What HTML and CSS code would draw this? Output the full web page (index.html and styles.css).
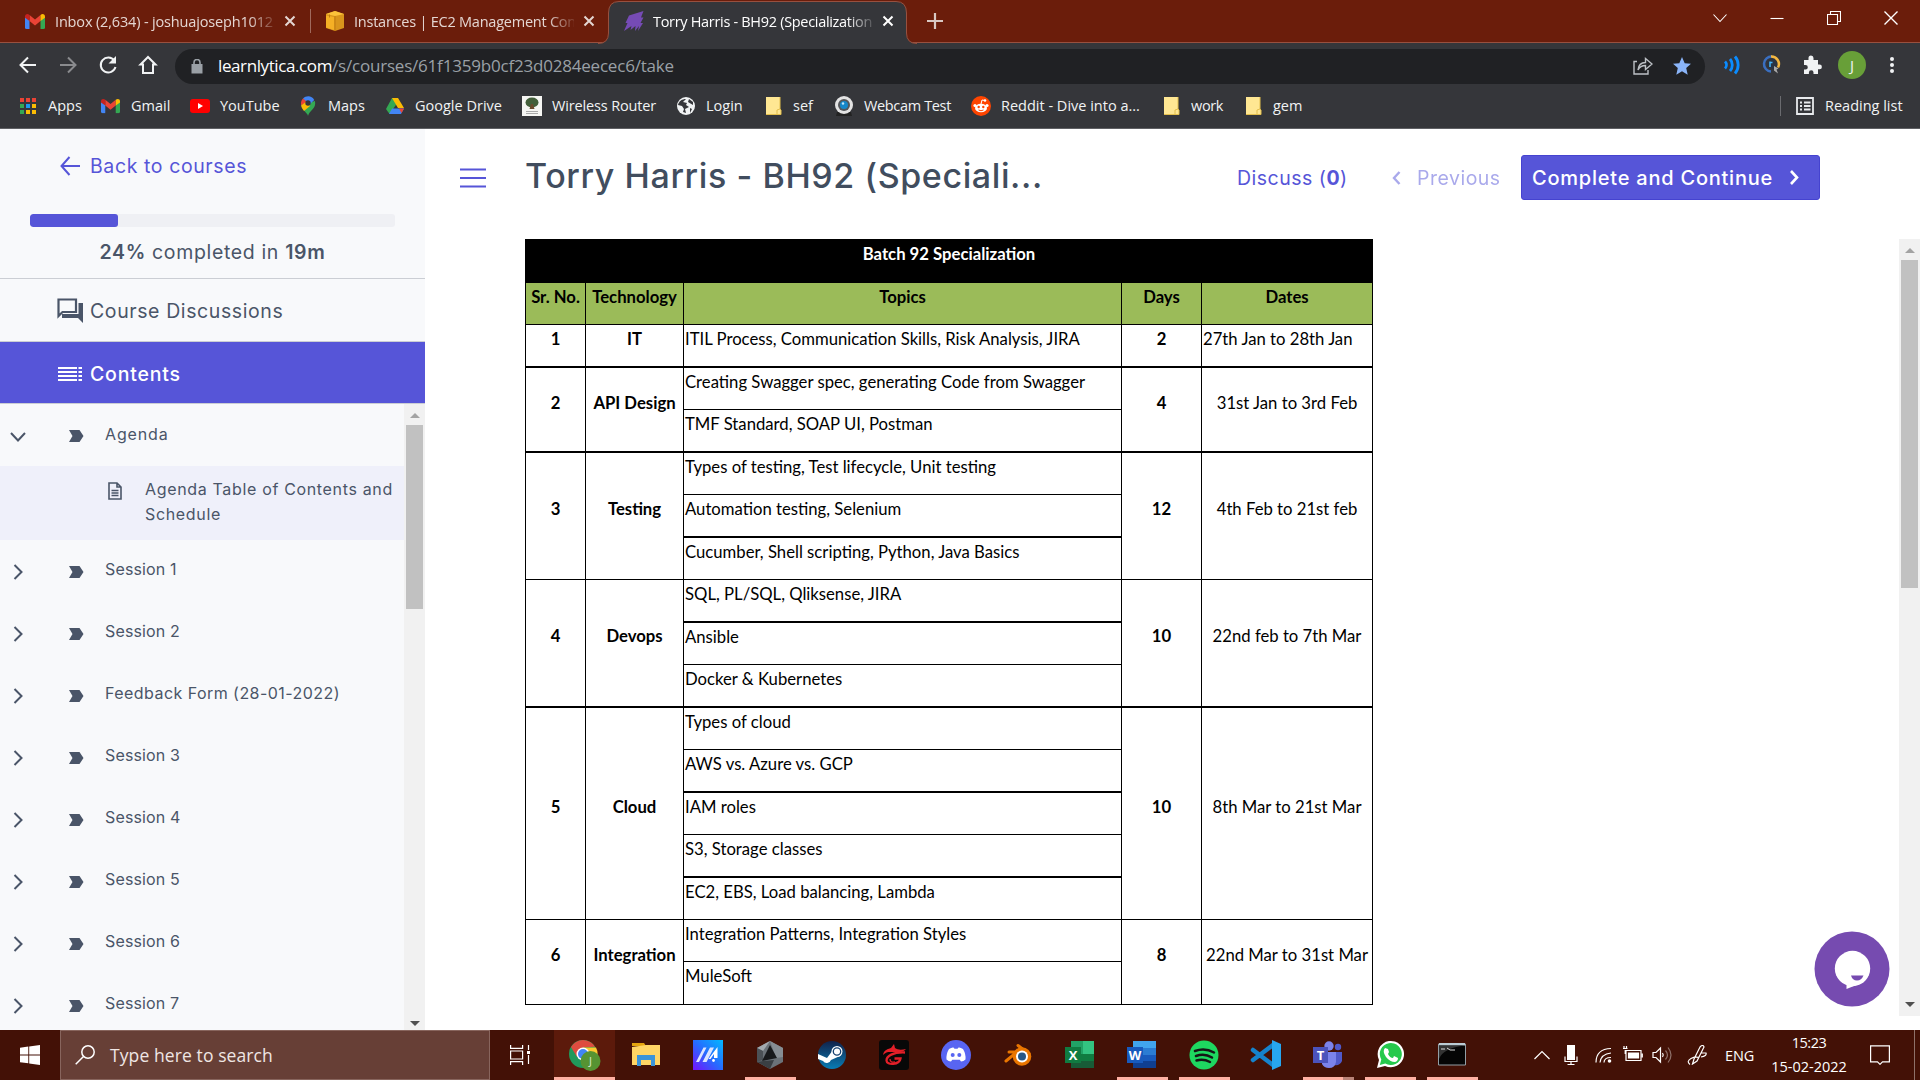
FILE: index.html
```html
<!DOCTYPE html>
<html lang="en">
<head>
<meta charset="utf-8">
<title>Torry Harris - BH92 (Specialization)</title>
<link rel="stylesheet" href="styles.css">
</head>
<body>
<svg class="defs" aria-hidden="true">
  <symbol id="gmail" viewBox="0 0 20 15"><path fill="#4285f4" d="M0 2v11.500q0 1.500 1.500 1.500H4.500V6z"/><path fill="#34a853" d="M20 2v11.500q0 1.500-1.500 1.500H15.500V6z"/><path fill="#ea4335" d="M4.500 1 10 5.500 15.500 1V7L10 11.500 4.500 7z"/><path fill="#c5221f" d="M0 2.500C0 .2 2.500-.7 4.500 1V7L0 3.800z"/><path fill="#fbbc04" d="M20 2.500C20 .2 17.500-.7 15.500 1V7L20 3.800z"/></symbol>
  <symbol id="x" viewBox="0 0 12 12"><path d="M1.500 1.500l9 9M10.500 1.500l-9 9" stroke="currentColor" stroke-width="2" fill="none"/></symbol>
  <symbol id="folder" viewBox="0 0 17 20"><path fill="#ffe793" d="M1 1h14v12l1 1v5H1z"/><path fill="none" stroke="#e3bf4d" d="M15 1v12l1 1v4.500h-4V14l3-1M1 18.500h11"/></symbol>
  <symbol id="right" viewBox="0 0 10 16"><path d="M1.500 1l7 7-7 7" fill="none" stroke="currentColor" stroke-width="2"/></symbol>
  <symbol id="tag" viewBox="0 0 15 12"><path fill="#4a5568" d="M0 0h10.500L14.500 6l-4 6H0l3.500-6z"/></symbol>
</svg>

<header class="browser">
  <div class="tabs">
    <div class="tab tab-mail"><svg class="fav" width="20" height="15"><use href="#gmail"/></svg><span class="tab-title t1">Inbox (2,634) - joshuajoseph1012</span><svg class="close" width="12" height="12"><use href="#x"/></svg></div>
    <div class="tab tab-aws"><svg class="fav" width="20" height="20" viewBox="0 0 20 20"><path fill="#d9951c" d="M1 3l9-3 9 3v14l-9 3-9-3z"/><path fill="#fcc33a" d="M1 3l9-3 9 3-9 2z"/><path fill="#f5b025" d="M1 4.500l8 1.500v13L1 16.500z"/><path stroke="#c17d10" d="M4.500 3.500v3M10 5v15" fill="none"/></svg><span class="tab-title t2">Instances | EC2 Management Con</span><svg class="close" width="12" height="12"><use href="#x"/></svg></div>
    <div class="tab tab-active">
      <svg class="tab-shape" width="319" height="43" viewBox="0 0 319 43"><path d="M0 42.500Q10.500 42.500 10.500 32V12Q10.500 .5 21 .5H298Q308.500 .5 308.500 12V32Q308.500 42.500 319 42.500V44H0z"/></svg>
      <svg class="fav" width="20" height="20" viewBox="0 0 20 20"><path fill="#764bb5" d="M5 4.500 19.500 0 17 6.500h2.500L16.500 12H19l-5 8 1-5-4 5 .5-5-5 4 1-4L0 20 3.500 12H1.500z"/></svg><span class="tab-title t3">Torry Harris - BH92 (Specialization</span><svg class="close" width="12" height="12"><use href="#x"/></svg>
    </div>
    <svg class="plus" width="16" height="16" viewBox="0 0 16 16"><path d="M8 0v16M0 8h16" stroke="#d9c8c3" stroke-width="2.200"/></svg>
    <div class="window-controls">
      <svg viewBox="0 0 14 14"><path d="M.5 3.500 7 10.500l6.500-7"/></svg>
      <svg viewBox="0 0 14 14"><path d="M.5 7.500h13"/></svg>
      <svg viewBox="0 0 14 14"><path d="M.5 3.500h10v10h-10zM3.500 3V.5h10v10H11"/></svg>
      <svg viewBox="0 0 14 14"><path d="M.5.5l13 13M13.500.5l-13 13" stroke-width="1.400"/></svg>
    </div>
  </div>

  <div class="toolbar">
    <svg class="nav" viewBox="0 0 20 20"><path d="M18 10H3M10 2.500 2.500 10l7.500 7.500"/></svg>
    <svg class="nav dim" viewBox="0 0 20 20"><path d="M2 10h15M10 2.500 17.500 10 10 17.500"/></svg>
    <svg class="nav" viewBox="0 0 20 20"><path d="M16.300 5.500A7.500 7.500 0 1 0 17.500 12"/><path d="M18 1v7.500h-7.500z" fill="#f1f3f4" stroke="none"/></svg>
    <svg class="nav" viewBox="0 0 20 20"><path d="M10 2 2.500 9.500H5V18h10V9.500h2.500z"/></svg>
    <div class="omnibox">
      <svg width="12" height="15" viewBox="0 0 12 15"><path fill="#9aa0a6" d="M.5 5h11v9.500H.5z"/><path d="M3 6V3.500a3 3 0 0 1 6 0V6" stroke="#9aa0a6" stroke-width="1.600" fill="none"/></svg>
      <span class="url"><b class="domain">learnlytica.com</b><span class="path">/s/courses/61f1359b0cf23d0284eecec6/take</span></span>
      <svg class="share" width="20" height="18" viewBox="0 0 20 18"><path d="M4 4.500H1V17h14v-4M5 13c.5-5 3-7.500 7.500-7.500V1.500L19 7l-6.500 5.500v-4C9 8.500 6.500 10 5 13z" fill="none" stroke="#bdc1c6" stroke-width="1.400"/></svg>
      <svg width="18" height="18" viewBox="0 0 18 18"><path fill="#8ab4f8" d="M9 0l2.700 6.200 6.300.6-4.800 4.300 1.500 6.700L9 14.300l-5.700 3.500 1.500-6.700L0 6.800l6.300-.6z"/></svg>
    </div>
    <div class="extensions">
      <svg viewBox="0 0 20 20"><path d="M3 6.500a5 5 0 0 1 0 7M8 4a9 9 0 0 1 0 12M13 1.500a13 13 0 0 1 0 17" fill="none" stroke="#0a8cff" stroke-width="2.800"/></svg>
      <svg viewBox="0 0 20 20"><path d="M10 1.500A7.500 7.500 0 0 0 9 16.500" fill="none" stroke="#3a6fc0" stroke-width="2.500"/><path d="M9 1.500a7.500 7.500 0 0 1 7 11" fill="none" stroke="#f4b740" stroke-width="2.500"/><circle cx="10" cy="9" r="5" fill="#2b3442"/><path d="M8 6.500v5.500M8 7.500h2.500" stroke="#45b6ff" stroke-width="1.500"/><path d="M12 11l4.500 2.500-2 1 1.500 4-4-3z" fill="#aaa"/></svg>
      <svg viewBox="0 0 20 20"><path fill="#f1f3f4" d="M2 5h4.500V3a2.500 2.500 0 0 1 5 0v2H16v4.500h1.500a2.300 2.300 0 0 1 0 4.800H16V19h-4.500v-1.500a2.300 2.300 0 0 0-4.600 0V19H2v-4.500h1.500a2.300 2.300 0 0 0 0-4.600H2z"/></svg>
      <span class="avatar">J</span>
      <svg viewBox="0 0 20 20" fill="#f1f3f4"><circle cx="10" cy="4" r="2"/><circle cx="10" cy="10" r="2"/><circle cx="10" cy="16" r="2"/></svg>
    </div>
  </div>

  <div class="bookmarks">
    <a><svg viewBox="0 0 20 20"><path fill="#ea4335" d="M2 2h4v4H2zM8 2h4v4H8zM14 2h4v4h-4z"/><path fill="#34a853" d="M2 8h4v4H2zM2 14h4v4H2z"/><path fill="#1a9af0" d="M8 8h4v4H8z"/><path fill="#fbbc04" d="M14 8h4v4h-4zM8 14h4v4H8zM14 14h4v4h-4z"/></svg><span>Apps</span></a>
    <a><svg><use href="#gmail" y="2.500" width="19" height="15"/></svg><span>Gmail</span></a>
    <a><svg viewBox="0 0 20 20"><rect y="3" width="20" height="14" rx="3" fill="#f00"/><path fill="#fff" d="M8 7l5 3-5 3z"/></svg><span>YouTube</span></a>
    <a><svg viewBox="0 0 20 20"><path fill="#34a853" d="M10 20c0-3-7-6-7-12.500L10 7l7-2c1.500 8-5.500 9-7 15z"/><path fill="#4285f4" d="M5 2.500C8-.8 14-.8 16.200 4L11 9z"/><path fill="#ea4335" d="M5 2.500 9 6 3.200 9.500C2.700 6.500 3 4.500 5 2.500z"/><path fill="#fbbc04" d="M9 5l3 5-6 5C4 12.500 3.500 11 3.200 9.500z"/><circle cx="10" cy="7" r="2.700" fill="#35363a"/></svg><span>Maps</span></a>
    <a><svg viewBox="0 0 20 20"><path fill="#34a853" d="M7 2h3L13 6 4.500 18 1 13z"/><path fill="#fbbc04" d="M7 2h6l6 10h-6z"/><path fill="#4285f4" d="M7 12.500h12L16 18H4z"/><path fill="#ea4335" d="M14 12.500h5L16.500 17z"/></svg><span>Google Drive</span></a>
    <a><svg viewBox="0 0 20 20"><path fill="#f6f6f3" d="M0 0h20v20H0z"/><ellipse cx="10" cy="6.500" rx="6.500" ry="5" fill="#435f3a"/><path fill="#6b4a2c" d="M9 8h2l1.500 5h-5z"/><path stroke="#aaa" d="M4 15.500h12M4 17.500h12"/></svg><span class="tight">Wireless Router</span></a>
    <a><svg viewBox="0 0 20 20"><circle cx="10" cy="10" r="9" fill="#f1f3f4"/><path fill="#35363a" d="M2 9l4 1 2 3-1 3 3 1-1-4 4-2-3-2 1-2-4-1 3-3C6 3 3 5 2 9zm11-6-1 3 5 3V6zM14 12l2 1-2 4z"/></svg><span>Login</span></a>
    <a><svg><use href="#folder" x="2" width="17" height="20"/></svg><span>sef</span></a>
    <a><svg viewBox="0 0 20 20"><path fill="#222" d="M3 16h14l1 4H2z"/><circle cx="10" cy="9" r="9" fill="#e3e3e3"/><circle cx="10" cy="9" r="6" fill="#54575b"/><circle cx="10" cy="9" r="4" fill="#1587c9"/><circle cx="9" cy="7.500" r="1.200" fill="#bde6fa"/></svg><span class="tighter">Webcam Test</span></a>
    <a><svg viewBox="0 0 20 20"><circle cx="10" cy="10" r="10" fill="#ff4500"/><ellipse cx="10" cy="12" rx="6" ry="4.300" fill="#fff"/><circle cx="4" cy="9.500" r="1.600" fill="#fff"/><circle cx="16" cy="9.500" r="1.600" fill="#fff"/><circle cx="14" cy="4.500" r="1.300" fill="#fff"/><path d="M10 8l1-4 3 .5" fill="none" stroke="#fff"/><circle cx="7.700" cy="11" r="1.200" fill="#ff4500"/><circle cx="12.300" cy="11" r="1.200" fill="#ff4500"/><path d="M7.500 14q2.500 1.500 5 0" fill="none" stroke="#ff4500"/></svg><span>Reddit - Dive into a...</span></a>
    <a><svg><use href="#folder" x="2" width="17" height="20"/></svg><span class="tighter">work</span></a>
    <a><svg><use href="#folder" x="2" width="17" height="20"/></svg><span>gem</span></a>
    <a class="reading"><svg viewBox="0 0 20 20"><path d="M2 2h16v16H2zM5 6.500h2M5 10h2M5 13.500h2M9 6.500h6.500M9 10h6.500M9 13.500h6.500" fill="none" stroke="#e8eaed" stroke-width="1.800"/></svg><span>Reading list</span></a>
  </div>
</header>

<div class="page">
  <aside class="sidebar">
    <a class="back"><svg width="20" height="20" viewBox="0 0 20 20"><path d="M20 10H1.500M9.500 1 1.500 10l8 9" fill="none" stroke="currentColor" stroke-width="2"/></svg><span>Back to courses</span></a>
    <div class="progress"><div class="progress-fill" style="width:24%"></div></div>
    <p class="completed"><b>24%</b> completed in <b>19m</b></p>
    <a class="side-link"><svg width="26" height="25" viewBox="0 0 26 25"><path fill="none" stroke="#4a5568" stroke-width="2.200" d="M1.500 1.500H19v12.500H5.500l-4 4z"/><path fill="#4a5568" d="M21.500 5H26v20l-5-5H5v-4h16.500z"/></svg><span>Course Discussions</span></a>
    <a class="side-link current"><svg width="26" height="16" viewBox="0 0 26 16"><path d="M1 2h19M1 6h19M1 10h19M1 14h19M21.500 2H25M21.500 6H25M21.500 10H25M21.500 14H25" stroke="#fff" stroke-width="2.200"/></svg><span>Contents</span></a>
    <div class="contents">
      <ul>
        <li><svg class="down" width="16" height="10" viewBox="0 0 16 10"><path d="M1 1l7 7.500L15 1" fill="none" stroke="currentColor" stroke-width="2"/></svg><svg class="tag"><use href="#tag"/></svg><span class="agenda">Agenda</span></li>
        <li class="lesson"><svg width="14" height="18" viewBox="0 0 14 18"><path d="M1 1h8l4 4v12H1zM9 1v4h4M3.500 8.500h7M3.500 11h7M3.500 13.500h7" fill="none" stroke="#4a5568" stroke-width="1.600"/></svg><span>Agenda Table of Contents and<br>Schedule</span></li>
        <li><svg class="right"><use href="#right"/></svg><svg class="tag"><use href="#tag"/></svg><span>Session 1</span></li>
        <li><svg class="right"><use href="#right"/></svg><svg class="tag"><use href="#tag"/></svg><span>Session 2</span></li>
        <li><svg class="right"><use href="#right"/></svg><svg class="tag"><use href="#tag"/></svg><span class="feedback">Feedback Form (28-01-2022)</span></li>
        <li><svg class="right"><use href="#right"/></svg><svg class="tag"><use href="#tag"/></svg><span>Session 3</span></li>
        <li><svg class="right"><use href="#right"/></svg><svg class="tag"><use href="#tag"/></svg><span>Session 4</span></li>
        <li><svg class="right"><use href="#right"/></svg><svg class="tag"><use href="#tag"/></svg><span>Session 5</span></li>
        <li><svg class="right"><use href="#right"/></svg><svg class="tag"><use href="#tag"/></svg><span>Session 6</span></li>
        <li><svg class="right"><use href="#right"/></svg><svg class="tag"><use href="#tag"/></svg><span>Session 7</span></li>
      </ul>
      <div class="scrollbar side-scroll"><i class="up"></i><div class="thumb"></div><i class="dn"></i></div>
    </div>
  </aside>

  <main class="main">
    <div class="course-head">
      <svg class="burger" width="26" height="20" viewBox="0 0 26 20"><path d="M0 1.500h26M0 10h26M0 18.500h26" stroke="#5655d8" stroke-width="2"/></svg>
      <h1>Torry Harris - BH92 (Speciali...</h1>
      <a class="discuss">Discuss (<b>0</b>)</a>
      <a class="previous"><svg width="9" height="14" viewBox="0 0 9 14"><path d="M7.500 1 2 7l5.500 6" fill="none" stroke="currentColor" stroke-width="2.400"/></svg><span>Previous</span></a>
      <a class="continue"><span>Complete and Continue</span><svg width="10" height="15" viewBox="0 0 10 15"><path d="M2 1l6 6.500L2 14" fill="none" stroke="currentColor" stroke-width="2.600"/></svg></a>
    </div>
    <div class="lesson-body">
      <table>
        <colgroup><col class="c1"><col class="c2"><col class="c3"><col class="c4"><col class="c5"></colgroup>
        <tr class="title"><th colspan="5">Batch 92 Specialization</th></tr>
        <tr class="heads"><th>Sr. No.</th><th>Technology</th><th>Topics</th><th>Days</th><th>Dates</th></tr>
        <tr class="thick"><th>1</th><th>IT</th><td>ITIL Process, Communication Skills, Risk Analysis, JIRA</td><th>2</th><td class="first-date">27th Jan to 28th Jan</td></tr>
        <tr><th class="k" rowspan="2">2</th><th class="k" rowspan="2">API Design</th><td>Creating Swagger spec, generating Code from Swagger</td><th class="k" rowspan="2">4</th><td class="date k" rowspan="2">31st Jan to 3rd Feb</td></tr>
        <tr class="thick"><td>TMF Standard, SOAP UI, Postman</td></tr>
        <tr><th rowspan="3">3</th><th rowspan="3">Testing</th><td>Types of testing, Test lifecycle, Unit testing</td><th rowspan="3">12</th><td class="date" rowspan="3">4th Feb to 21st feb</td></tr>
        <tr class="thick"><td>Automation testing, Selenium</td></tr>
        <tr><td>Cucumber, Shell scripting, Python, Java Basics</td></tr>
        <tr class="thick"><th class="k" rowspan="3">4</th><th class="k" rowspan="3">Devops</th><td>SQL, PL/SQL, Qliksense, JIRA</td><th class="k" rowspan="3">10</th><td class="date k" rowspan="3">22nd feb to 7th Mar</td></tr>
        <tr><td>Ansible</td></tr>
        <tr class="thick"><td>Docker &amp; Kubernetes</td></tr>
        <tr><th rowspan="5">5</th><th rowspan="5">Cloud</th><td>Types of cloud</td><th rowspan="5">10</th><td class="date" rowspan="5">8th Mar to 21st Mar</td></tr>
        <tr class="thick"><td>AWS vs. Azure vs. GCP</td></tr>
        <tr><td>IAM roles</td></tr>
        <tr class="thick"><td>S3, Storage classes</td></tr>
        <tr><td>EC2, EBS, Load balancing, Lambda</td></tr>
        <tr><th rowspan="2">6</th><th rowspan="2">Integration</th><td>Integration Patterns, Integration Styles</td><th rowspan="2">8</th><td class="date" rowspan="2">22nd Mar to 31st Mar</td></tr>
        <tr class="last"><td>MuleSoft</td></tr>
      </table>
      <div class="scrollbar main-scroll"><i class="up"></i><div class="thumb"></div><i class="dn"></i></div>
    </div>
    <svg class="chat" width="76" height="76" viewBox="0 0 76 76"><circle cx="38" cy="38" r="37.500" fill="#764bb0"/><circle cx="38.500" cy="37.500" r="17.700" fill="#fff"/><path fill="#fff" d="M32.500 52v6L50 51z"/><path fill="#764bb0" d="M37 44.500h12.500q-2 5-6.500 5t-6-5z"/></svg>
  </main>
</div>

<footer class="taskbar">
  <div class="start"><svg width="20" height="20" viewBox="0 0 20 20"><path fill="#fff" d="M0 2.800l8.300-1.200v7.900H0zM9.200 1.500 20 0v9.500H9.200zM0 10.400h8.300v7.900L0 17.200zM9.200 10.400H20V20L9.200 18.500z"/></svg></div>
  <div class="search"><svg width="20" height="20" viewBox="0 0 20 20"><circle cx="13" cy="7" r="6.200" fill="none" stroke="#fff" stroke-width="1.500"/><path d="M8.500 11.500.7 19.300" stroke="#fff" stroke-width="1.500"/></svg><span>Type here to search</span></div>
  <div class="app taskview"><svg width="20" height="20" viewBox="0 0 20 20"><path d="M.6 0v3.400h12V0M.6 20v-3.400h12V20M.6 6h12v8h-12zM18.500 0v5M18.500 10v9" fill="none" stroke="#fff" stroke-width="1.200"/><path fill="#fff" d="M17 6h3v3h-3z"/></svg></div>
  <div class="app active wide"><svg viewBox="0 0 32 32"><circle cx="14" cy="15" r="14" fill="#21995a"/><path fill="#de4c3f" d="M2 8a14 14 0 0 1 24-.3L14 8.500 8 18z"/><path fill="#fdc82f" d="M14 8.500h13A14 14 0 0 1 16 29l4-11z"/><circle cx="14" cy="15" r="6.500" fill="#fff"/><circle cx="14" cy="15" r="5" fill="#4285f4"/><circle cx="21.500" cy="22" r="10" fill="#569332"/><text x="21.500" y="26" text-anchor="middle" class="badge">J</text></svg></div>
  <div class="app"><svg viewBox="0 0 32 32"><path fill="#e5a50f" d="M2 4h12l2 3H2z"/><path fill="#ffd565" d="M2 8l14-2h14v20H2z"/><path fill="#3b94d9" d="M7 27V16h18v11h-4v-6H11v6z"/></svg></div>
  <div class="app"><svg viewBox="0 0 32 32"><defs><linearGradient id="asus" x1="0" y1="1" x2="1" y2="0"><stop stop-color="#7512fb"/><stop offset=".5" stop-color="#266cff"/><stop offset="1" stop-color="#02b9ff"/></linearGradient></defs><path fill="url(#asus)" d="M1 1h30v30H1z"/><path fill="#dbe4ff" d="M4 23 11.500 8.500h3L7 23zM10.500 23 18 8.500h4L14.500 23z"/><path fill="#fff" d="M16.500 20 25.500 8v11H22v-4l-3.500 5z"/><circle cx="21.500" cy="21.500" r="1.400" fill="#fff"/></svg></div>
  <div class="app open"><svg viewBox="0 0 32 32"><path fill="#6b7278" d="M16 2l13 7v14l-13 7-13-7V9z"/><path fill="#a3a9ae" d="M16 2 3 9l6 3z"/><path fill="#4b5156" d="M3 9v14l6-2V12z"/><path fill="#3a3f43" d="M3 23l13 7 4-9-11 1z"/><path fill="#868d93" d="M16 2l13 7v9l-7 1z"/><path fill="#17191b" d="M16 6l7 13-15 3z"/></svg></div>
  <div class="app"><svg viewBox="0 0 32 32"><defs><linearGradient id="steam" x2="0" y2="1"><stop stop-color="#12224a"/><stop offset="1" stop-color="#087db5"/></linearGradient></defs><circle cx="16" cy="16" r="14" fill="url(#steam)"/><path fill="#fff" d="M2 15l9 4 6-8 7 6-9 4a4.500 4.500 0 0 1-8 1l-5-2z"/><circle cx="21" cy="12.500" r="5.500" fill="#fff"/><circle cx="21" cy="12.500" r="3.700" fill="#fff" stroke="#164170" stroke-width="1.300"/></svg></div>
  <div class="app"><svg viewBox="0 0 32 32"><rect x="1" y="1" width="30" height="30" rx="3" fill="#080808"/><path fill="#e31f28" d="M5 16c1-6 6-6 8-7l3-4 1 4c3 2 6 2 11 1-3 4-8 3-12 3-5 0-7-1-11 3z"/><path d="M27 13.500C15 13 8.500 17 8.500 21.500c0 5 13 4.500 14-2h-6" fill="none" stroke="#e31f28" stroke-width="2.300"/><path d="M12 20q0 4 5 3" fill="none" stroke="#e31f28" stroke-width="1.300"/></svg></div>
  <div class="app"><svg viewBox="0 0 32 32"><circle cx="16" cy="16" r="15" fill="#5865f2"/><path fill="#fff" d="M9 10q3-2 4.500-1.500l1 1.300h3l1-1.300Q20 8 23 10q3 5 2.500 10.500-2 2-4.500 2l-1.300-1.800h-7.400L11 22.500q-2.500 0-4.500-2Q6 15 9 10z"/><circle cx="12.700" cy="16" r="2" fill="#5865f2"/><circle cx="19.300" cy="16" r="2" fill="#5865f2"/></svg></div>
  <div class="app"><svg viewBox="0 0 32 32"><path d="M4 22 15 13H7M16 6.500l11 8.500" fill="none" stroke="#ea7600" stroke-width="3" stroke-linecap="round"/><circle cx="20" cy="17.500" r="9.300" fill="#ea7600"/><circle cx="20" cy="17.500" r="6" fill="#fff"/><circle cx="20" cy="17.500" r="4" fill="#265787"/></svg></div>
  <div class="app"><svg viewBox="0 0 32 32"><path fill="#21a366" d="M7 2h23v27H7z"/><path fill="#33c481" d="M19 2h11v13H19z"/><path fill="#107c41" d="M7 15h23v7H7z"/><path fill="#185c37" d="M7 22h23v7H7z"/><path fill="#107c41" d="M1 8h16v16H1z"/><text x="9" y="20.500" text-anchor="middle" class="ic">X</text></svg></div>
  <div class="app open"><svg viewBox="0 0 32 32"><path fill="#41a5ee" d="M7 2h23v7H7z"/><path fill="#2b7cd3" d="M7 9h23v7H7z"/><path fill="#185abd" d="M7 16h23v7H7z"/><path fill="#103f91" d="M7 22h23v7H7z"/><path fill="#185abd" d="M1 8h16v16H1z"/><text x="9" y="20.500" text-anchor="middle" class="ic">W</text></svg></div>
  <div class="app open"><svg viewBox="0 0 32 32"><circle cx="16" cy="16" r="14.500" fill="#1ed760"/><path d="M7 12q10-3.500 19 1.500M8 17q8.500-3 16 1.500M8.500 21.500q7-2 13.500 1.500" fill="none" stroke="#151515" stroke-width="2.500" stroke-linecap="round"/></svg></div>
  <div class="app"><svg viewBox="0 0 32 32"><path d="M3 11l20 15M3 21 23 6" stroke="#1683cc" stroke-width="4.500" stroke-linecap="round"/><path fill="#27a6ef" d="M22 1l9 4v22l-9 4z"/></svg></div>
  <div class="app open stacked"><svg viewBox="0 0 32 32"><circle cx="17" cy="7" r="4.700" fill="#7b83eb"/><circle cx="26" cy="8" r="3.200" fill="#5059c9"/><path fill="#5059c9" d="M20 13h10v9q-2 5-8 4z"/><path fill="#7b83eb" d="M10 13h14v10q-1 6-7 6-5 0-7-4z"/><path fill="#4b53bc" d="M1 8h15v16H1z"/><text x="8.500" y="21" text-anchor="middle" class="ic">T</text></svg></div>
  <div class="app open"><svg viewBox="0 0 32 32"><path fill="#fff" d="M3 29l2-8A13.200 13.200 0 1 1 11 27z"/><path fill="#25c94c" d="M5.800 26 7.300 20.500a11 11 0 1 1 4 4z"/><path fill="#fff" d="M11 9l3 1 1 3-1 2q2 4 5 4l1-2 4 2q0 3-3 4-5 0-9-5-4-6-1-9z"/></svg></div>
  <div class="app open"><svg viewBox="0 0 32 32"><path fill="#050505" stroke="#929fa5" d="M2.500 5h27v21h-27z"/><path fill="#bccbd3" d="M3 4h26v2.500H3z"/><path fill="#333" d="M3 6.500h26Q7 9 3 20z"/><path d="M5 10h4M11 9l3 2h5" stroke="#ddd" fill="none"/></svg></div>
  <div class="tray">
    <svg class="t-up" viewBox="0 0 20 20"><path d="M2.500 14 10 6.500l7.500 7.500"/></svg>
    <svg class="t-mic" viewBox="0 0 20 20"><rect x="6" y="0" width="8" height="15" fill="#fff" stroke="none"/><path d="M4 11.500v5h12v-5M10 17v2.500M6.500 19.500h7"/></svg>
    <svg class="t-wifi" viewBox="0 0 20 20"><path d="M2 17.500Q2 4 17 3.500M6 17.500Q7 9 17 8M10 17.500q0-5 7-5"/><circle cx="15.500" cy="16" r="1.800" fill="#fff" stroke="none"/></svg>
    <svg class="t-bat" viewBox="0 0 20 20"><path d="M3 5.500h15v10H3zM19.300 8.500v4M0 3.500h4.500M1 1v3M3.500 1v3M2.200 5v4"/><path d="M5.500 8h10v5h-10z" fill="#fff"/></svg>
    <svg class="t-vol" viewBox="0 0 20 20"><path d="M1 7.500h3L8.500 3v14L4 12.500H1zM10.500 8q1.500 2 0 4"/><path d="M13.500 5.500q4 4.500 0 9M16 2.500q6 7.500 0 15" opacity=".4"/></svg>
    <svg class="t-pen" viewBox="0 0 20 20"><path d="M7 14 13 2q3-3 4 0l-7 14-4.500 3zM3 19.500q-4-3 1-6 4-2 8-1M14 8l5 0q1 3-5 4"/></svg>
    <span class="lang">ENG</span>
    <div class="clock"><span class="time">15:23</span><span>15-02-2022</span></div>
    <svg class="t-note" viewBox="0 0 20 20"><path d="M.6.8h18.800v16H12.500L10 19.300 7.500 16.800H.6z"/></svg>
  </div>
</footer>
</body>
</html>
```
FILE: styles.css
```css
* { box-sizing: border-box; }
body { margin: 0; width: 1920px; height: 1080px; overflow: hidden; background: #fff; font-family: Inter, sans-serif; }
.defs { position: absolute; width: 0; height: 0; }
svg { display: block; flex: none; }
a { color: inherit; text-decoration: none; }

.browser { height: 129px; background: #35363a; border-bottom: 1px solid #5f6064; font-family: "Open Sans", sans-serif; font-size: 14.500px; color: #f1f3f4; }
.tabs { height: 43px; background: #6b1d0b; display: flex; border-bottom: 1px solid #97503f; }
.tab { display: flex; align-items: center; height: 42px; position: relative; color: #e4d6d2; }
.tab > * { position: relative; }
.tab-title { white-space: nowrap; width: 220px; margin-left: 9px; mask-image: linear-gradient(90deg, #000 88%, transparent 102%); }
.t1 { letter-spacing: -.16px; margin-left: 10px; }
.t2 { letter-spacing: -.23px; }
.t3 { letter-spacing: -.31px; }
.tab-mail { width: 311px; padding-left: 25px; }
.tab-mail::after { content: ""; width: 1px; height: 24px; background: #a0695c; margin-left: 14px; }
.tab-aws { width: 298px; padding-left: 14px; }
.tab-active { width: 299px; padding-left: 15px; color: #fff; }
.tab .tab-shape { position: absolute; left: -11px; top: 1px; }
.tab-shape path { fill: #35363a; stroke: #97503f; }
.close { margin-left: 9px; }
.plus { margin: 13px 0 0 19px; }
.window-controls { display: flex; gap: 43px; margin: 11px 22px 0 auto; }
.window-controls svg { width: 14px; height: 14px; fill: none; stroke: #fff; stroke-width: 1.100; }

.toolbar { height: 44px; display: flex; align-items: center; padding-left: 18px; }
.nav { width: 20px; height: 20px; margin-right: 20px; fill: none; stroke: #f1f3f4; stroke-width: 2; }
.dim { opacity: .45; }
.omnibox { width: 1530px; height: 35px; margin: 2px 0 0 -3px; border-radius: 18px; background: #202124; display: flex; align-items: center; padding: 0 14px 0 16px; }
.url { margin-left: 15px; padding-bottom: 1px; font-size: 17px; white-space: nowrap; color: #9aa0a6; letter-spacing: -.2px; }
.domain { font-weight: 400; color: #fff; letter-spacing: -.4px; }
.share { margin: 0 20px 0 auto; }
.extensions { display: flex; gap: 20px; align-items: center; margin-left: 17px; }
.extensions svg { width: 20px; height: 20px; }
.avatar { width: 28px; height: 28px; margin: 0 -4px; border-radius: 50%; background: #689f38; text-align: center; font-size: 15px; line-height: 28px; }

.bookmarks { display: grid; grid-template-columns: 83px 89px 108px 87px 137px 154px 87px 71px 137px 190px 82px 1fr 140px; padding: 9px 0 0 18px; }
.bookmarks a { display: flex; align-items: center; height: 20px; white-space: nowrap; }
.bookmarks span { padding-bottom: 2px; }
.bookmarks svg { width: 20px; height: 20px; margin-right: 10px; }
.bookmarks .reading { border-left: 1px solid #6a6b6f; padding-left: 14px; }
.tight { letter-spacing: -.15px; }
.tighter { letter-spacing: -.35px; }

.page { display: flex; height: 901px; }
.sidebar { width: 425px; background: #f8f9fb; color: #4a5568; font-size: 19.500px; letter-spacing: .6px; }
.back { height: 85px; padding: 0 0 11px 60px; display: flex; align-items: center; gap: 10px; color: #5655d8; }
.progress { margin: 0 30px; height: 13px; border-radius: 3px; background: #eff0f4; overflow: hidden; }
.progress-fill { height: 13px; border-radius: 3px; background: #5655d8; }
.completed { margin: 0; height: 51px; line-height: 51px; text-align: center; letter-spacing: .65px; }
.completed b { font-weight: 600; }
.side-link { height: 63px; display: flex; align-items: center; padding-left: 57px; gap: 7px; border-top: 1px solid #cbced4; }
.side-link span { padding-top: 2px; }
.current { background: #5655d8; color: #fff; border-bottom: 1px solid #cbced4; font-weight: 500; letter-spacing: .8px; }
.current svg { margin-top: 2px; }
.contents { height: 626px; display: flex; overflow: hidden; letter-spacing: .15px; }
.contents ul { list-style: none; margin: 0; padding: 0; width: 404px; font-size: 16px; }
.contents li { height: 62px; display: flex; align-items: center; padding: 0 0 4px 10px; }
.contents .down { margin: 7px 43px 0 0; }
.contents .right { width: 10px; height: 18px; margin: 6px 46px 0 3px; }
.contents .tag { width: 15px; height: 12px; margin: 5px 21px 0 0; }
.contents .agenda { padding-top: 2px; letter-spacing: .85px; }
.contents .feedback { letter-spacing: .45px; }
.contents .lesson { height: 74px; padding: 11px 0 0 108px; background: #eff0fa; align-items: flex-start; line-height: 25px; white-space: nowrap; letter-spacing: .66px; }
.lesson svg { margin: 5px 23px 0 0; }

.scrollbar { width: 21px; background: #f1f1f1; display: flex; flex-direction: column; align-items: center; }
.scrollbar i { width: 0; height: 0; border: 5px solid transparent; flex: none; }
.scrollbar .up { border-top: 0; border-bottom-color: #a3a3a3; margin-top: 9px; margin-bottom: 7px; }
.scrollbar .dn { border-bottom: 0; border-top-color: #505050; margin: auto 0 4px; }
.thumb { width: 17px; background: #c1c1c1; }
.side-scroll .thumb { height: 184px; }
.main-scroll .thumb { height: 328px; }
.main-scroll .dn { margin-bottom: 9px; }

.main { flex: 1; position: relative; }
.course-head { height: 110px; display: flex; align-items: center; padding: 0 100px 13px 35px; color: #5655d8; font-size: 19.500px; letter-spacing: .5px; white-space: nowrap; }
h1 { margin: 0 0 0 39px; padding-bottom: 4px; width: 712px; font-size: 34px; font-weight: 500; color: #414d5e; line-height: 44px; letter-spacing: .6px; }
.previous { display: flex; align-items: center; gap: 16px; width: 128px; opacity: .5; }
.discuss { width: 155px; }
.continue { margin-left: auto; width: 299px; height: 45px; padding: 0 20px 0 10px; display: flex; align-items: center; justify-content: space-between; background: #5655d8; border: 1px solid #4543d0; border-radius: 3px; color: #fff; font-weight: 500; font-size: 20px; letter-spacing: .77px; }
.lesson-body { height: 777px; display: flex; justify-content: space-between; align-items: flex-start; padding-left: 100px; }
.main-scroll { height: 777px; }

table { border-spacing: 0; table-layout: fixed; width: 848px; border-left: 1px solid #000; font: 16.700px Lato, sans-serif; color: #000; }
.c1 { width: 60px; } .c2 { width: 98px; } .c3 { width: 438px; } .c4 { width: 80px; } .c5 { width: 171px; }
tr { height: 42px; }
th, td { padding: 0 1px 14px; border: 0 solid #000; border-width: 0 1px 1px 0; white-space: nowrap; line-height: 20px; }
th { font-weight: 700; padding: 0 0 14px; }
.thick, .last { height: 43px; }
.thick > *, .k { border-bottom-width: 2px; }
.title { height: 44px; background: #000; color: #fff; }
.title th { padding-bottom: 13px; }
.heads { background: #9bbb59; }
.date { text-align: center; }
.chat { position: absolute; left: 1389px; top: 802px; }

.taskbar { height: 50px; display: flex; background: #431106; color: #fff; font-family: "Open Sans", sans-serif; }
.start { width: 60px; padding: 15px 0 0 20px; }
.search { width: 430px; display: flex; align-items: center; gap: 15px; padding-left: 14px; background: #673f36; border: 1px solid #88655d; font-size: 17.500px; letter-spacing: .1px; color: #efe6e4; }
.app { width: 62px; display: flex; align-items: center; justify-content: center; position: relative; }
.app svg { width: 32px; height: 32px; }
.app.taskview { width: 64px; padding-right: 4px; }
.taskview svg { width: 20px; height: 20px; }
.app.wide { width: 61px; background: #5c1a0b; }
.open::after, .active::after { content: ""; position: absolute; left: 6px; right: 5px; bottom: 0; height: 3px; background: #ffb1a3; }
.active::after { left: 0; right: 0; }
.stacked::after { background: linear-gradient(90deg, #ffb1a3 40px, #b98378 40px); }
.badge { font: 11px "Open Sans", sans-serif; fill: #d7e8cc; }
.ic { font: bold 13px "Open Sans", sans-serif; fill: #fff; }
.tray { margin-left: auto; display: flex; align-items: center; width: 388px; border-right: 1px solid #8e7169; margin-right: 5px; }
.tray svg { width: 20px; height: 20px; fill: none; stroke: #fff; stroke-width: 1.200; }
.tray .t-up { margin-left: 5px; } .tray .t-mic { margin-left: 9px; } .tray .t-wifi { margin-left: 13px; }
.tray .t-bat { margin-left: 9px; } .tray .t-vol { margin-left: 9px; } .tray .t-pen { margin-left: 15px; }
.lang { margin-left: 18px; font-size: 14.500px; letter-spacing: -.15px; width: 30px; }
.clock { width: 84px; margin-left: 12px; text-align: center; font-size: 14.500px; line-height: 24px; display: flex; flex-direction: column; align-items: center; }
.time { letter-spacing: -.5px; }
.tray .t-note { margin-left: 19px; }
```
